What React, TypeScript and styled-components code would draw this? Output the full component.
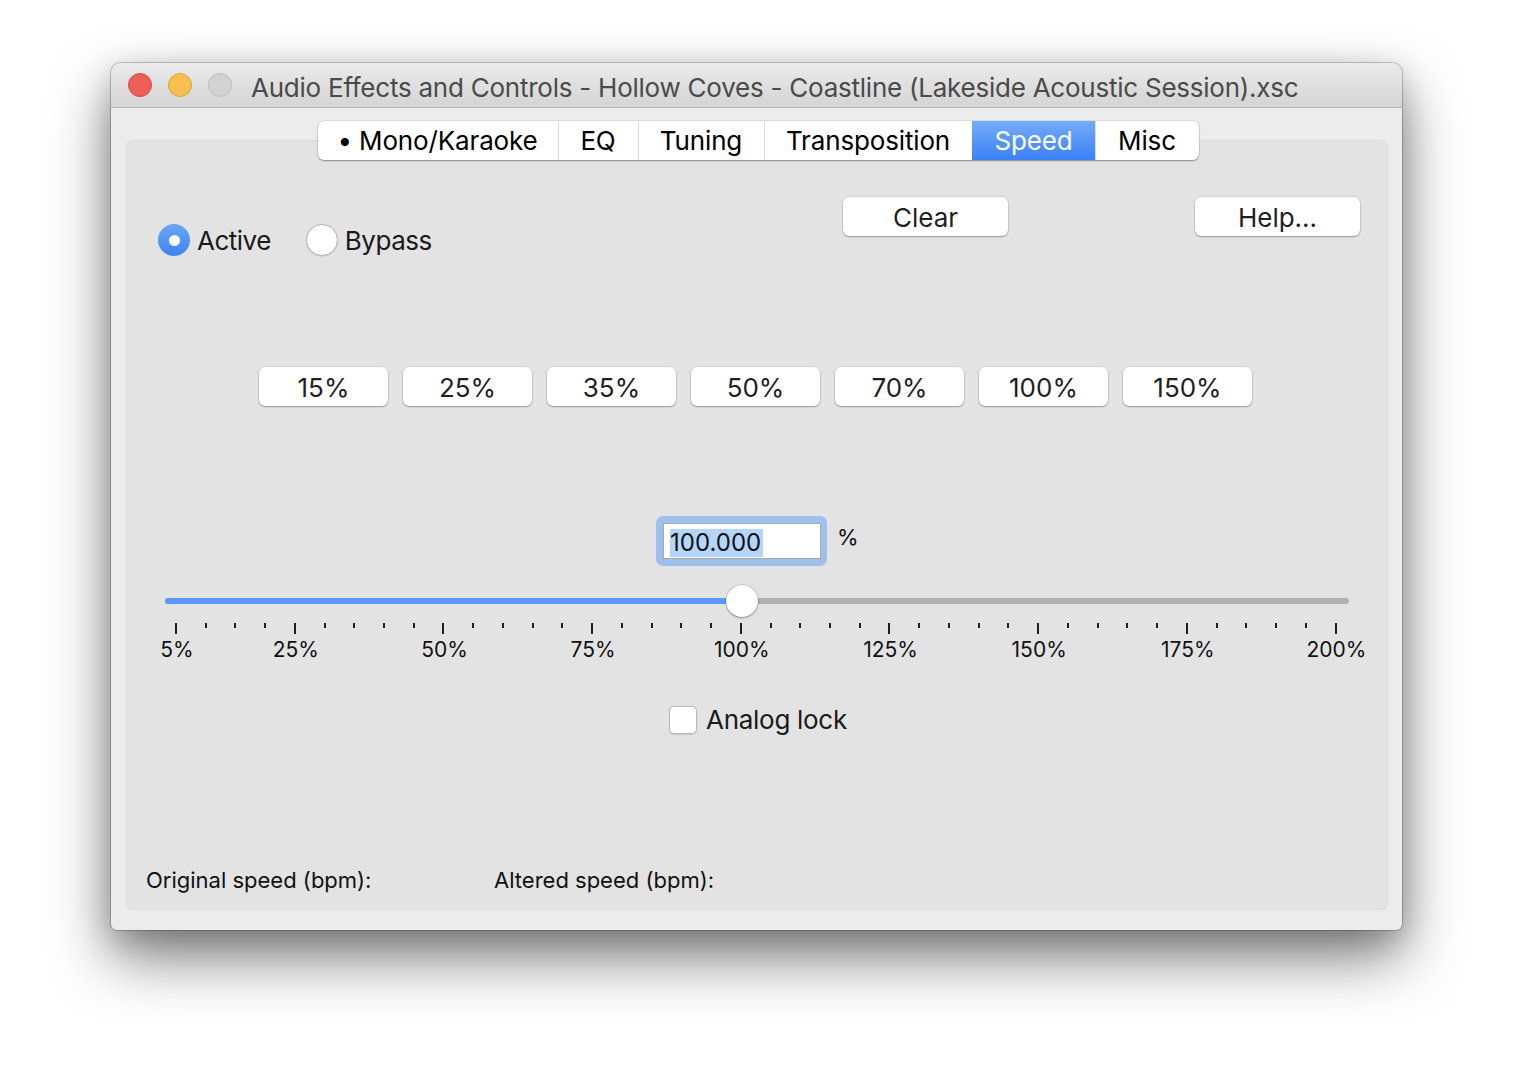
import React from 'react';
import styled, {createGlobalStyle, css} from 'styled-components';

const GlobalStyle = createGlobalStyle`
  html, body {
    margin: 0;
    background: #ffffff;
  }
  body {
    font-family: Inter, "Liberation Sans", sans-serif;
    -webkit-font-smoothing: antialiased;
  }
`;

const TAB_ITEMS = [
    {label: '• Mono/Karaoke', width: 240},
    {label: 'EQ', width: 80},
    {label: 'Tuning', width: 126},
    {label: 'Transposition', width: 208},
    {label: 'Speed', width: 123},
    {label: 'Misc', width: 104},
];
const PRESETS = ['15%', '25%', '35%', '50%', '70%', '100%', '150%'];
const TICK_COUNT = 40;
const MAJOR_LABELS: Record<number, string> = {
    0: '5%', 4: '25%', 9: '50%', 14: '75%', 19: '100%', 24: '125%', 29: '150%', 34: '175%', 39: '200%',
};
const SPEED = 100;
const SLIDER_FILL = ((SPEED - 5) / 195) * 100 + 0.05;

const Stage = styled.div`
    width: 1514px;
    height: 1090px;
    padding: 63px 0 0 111px;
    box-sizing: border-box;
    overflow: hidden;
`;

const Window = styled.div`
    width: 1291px;
    height: 867px;
    display: flex;
    flex-direction: column;
    background: #ececec;
    border-radius: 10px 10px 6px 6px;
    box-shadow: 0 0 0 1px rgba(0, 0, 0, 0.2), 0 28px 60px rgba(0, 0, 0, 0.5), 0 8px 30px rgba(0, 0, 0, 0.18);
    overflow: hidden;
`;

const TitleBar = styled.div`
    height: 44px;
    display: flex;
    align-items: center;
    padding-left: 17px;
    background: linear-gradient(#ebebeb, #d4d4d4);
    border-bottom: 1px solid #b8b8b8;
    flex-shrink: 0;
`;

const Lights = styled.div`
    display: flex;
    gap: 16px;
`;

const Light = styled.span<{$fill: string; $edge: string}>`
    width: 24px;
    height: 24px;
    box-sizing: border-box;
    border-radius: 50%;
    background: ${p => p.$fill};
    border: 1px solid ${p => p.$edge};
`;

const Title = styled.div`
    margin-left: 19px;
    margin-top: 4px;
    font-size: 26px;
    letter-spacing: -0.24px;
    color: #4a4a4a;
    white-space: nowrap;
`;

const Body = styled.div`
    flex: 1;
    display: flex;
    flex-direction: column;
    padding: 13px 14px 20px 15px;
`;

const TabStrip = styled.div`
    align-self: center;
    position: relative;
    z-index: 1;
    display: flex;
    height: 39px;
    margin-bottom: -20px;
    margin-left: 2px;
    background: #ffffff;
    border-radius: 6px;
    box-shadow: 0 1px 1.5px rgba(0, 0, 0, 0.35), 0 0 0 0.5px rgba(0, 0, 0, 0.14);
    overflow: hidden;
`;

const Tab = styled.div<{$width: number; $selected?: boolean}>`
    width: ${p => p.$width}px;
    box-sizing: border-box;
    display: flex;
    align-items: center;
    justify-content: center;
    font-size: 26px;
    letter-spacing: -0.15px;
    color: #000;
    & + & {
        border-left: 1px solid #dcdcdc;
    }
    ${p => p.$selected && css`
        background: linear-gradient(#74acf8, #3a81f6);
        color: #fff;
        border-left-color: transparent !important;
    `}
`;

const Panel = styled.div`
    flex: 1;
    display: flex;
    flex-direction: column;
    background: #e3e3e3;
    border-radius: 6px;
    box-shadow: inset 0 0 0 1px rgba(0, 0, 0, 0.035);
`;

const TopRow = styled.div`
    display: flex;
    align-items: flex-start;
    margin-top: 57px;
    height: 59px;
    padding: 0 28px 0 32px;
`;

const RadioGroup = styled.div`
    flex: 1;
    display: flex;
    gap: 35px;
    margin-top: 27px;
`;

const RadioItem = styled.label`
    display: flex;
    align-items: center;
    gap: 7px;
    font-size: 26px;
    letter-spacing: -0.5px;
    color: #1a1a1a;
    height: 32px;
`;

const RadioDot = styled.span<{$on?: boolean}>`
    width: 32px;
    height: 32px;
    box-sizing: border-box;
    border-radius: 50%;
    display: flex;
    align-items: center;
    justify-content: center;
    ${p => p.$on
        ? css`
            background: linear-gradient(#6aa6f8, #3d84f4);
            &::after {
                content: '';
                width: 11px;
                height: 11px;
                border-radius: 50%;
                background: #fff;
            }
        `
        : css`
            background: #fff;
            border: 1px solid #b3b3b3;
            box-shadow: 0 0.5px 1px rgba(0, 0, 0, 0.15);
        `}
`;

const PushButton = styled.div<{$width: number}>`
    width: ${p => p.$width}px;
    height: 39px;
    box-sizing: border-box;
    display: flex;
    align-items: center;
    justify-content: center;
    background: #fff;
    border-radius: 6px;
    box-shadow: 0 1px 1.5px rgba(0, 0, 0, 0.3), 0 0 0 0.5px rgba(0, 0, 0, 0.13);
    font-size: 26px;
    color: #1f1f1f;
    padding-top: 1px;
`;

const Spacer = styled.div<{$width: number}>`
    width: ${p => p.$width}px;
`;

const PresetRow = styled.div`
    display: flex;
    justify-content: center;
    gap: 15px;
    margin-top: 111px;
    padding-right: 3px;
`;

const FieldRow = styled.div`
    display: flex;
    align-items: center;
    gap: 10px;
    margin-top: 110px;
    padding-left: 530px;
`;

const FocusRing = styled.div`
    width: 171px;
    height: 50px;
    box-sizing: border-box;
    padding: 7px 6px 7px 7px;
    border-radius: 7px;
    background: #9ec0ec;
`;

const TextField = styled.div`
    height: 100%;
    box-sizing: border-box;
    background: #fff;
    border: 1px solid #a8a8a8;
    display: flex;
    align-items: center;
    padding: 3px 0 0 6px;
    font-size: 24px;
    color: #111;
`;

const Selection = styled.span`
    background: #b4d6fe;
    line-height: 28px;
    padding-right: 2px;
`;

const Unit = styled.span`
    font-size: 22px;
    color: #111;
    margin-top: -8px;
`;

const SliderRow = styled.div`
    margin: 19px 0 0 39px;
    width: 1184px;
    height: 32px;
    display: flex;
    align-items: center;
    position: relative;
`;

const Track = styled.div`
    width: 100%;
    height: 6px;
    border-radius: 3px;
    background: #b1b1b1;
    display: flex;
    overflow: hidden;
`;

const TrackFill = styled.div`
    height: 100%;
    background: #5a99f5;
`;

const Knob = styled.div`
    position: absolute;
    top: 0;
    width: 32px;
    height: 32px;
    margin-left: -16px;
    box-sizing: border-box;
    border-radius: 50%;
    background: #fff;
    box-shadow: 0 1px 2px rgba(0, 0, 0, 0.35), 0 0 0 0.5px rgba(0, 0, 0, 0.18);
`;

const Scale = styled.div`
    display: grid;
    grid-template-columns: repeat(${TICK_COUNT}, 29.744px);
    grid-template-rows: 11px auto;
    row-gap: 3px;
    margin: 6px 0 0 35px;
`;

const Tick = styled.div<{$major?: boolean}>`
    justify-self: center;
    width: 2px;
    height: ${p => (p.$major ? 11 : 5)}px;
    background: #1e1e1e;
`;

const TickLabel = styled.div<{$col: number}>`
    grid-row: 2;
    grid-column: ${p => p.$col + 1};
    justify-self: center;
    white-space: nowrap;
    font-size: 21px;
    line-height: 25px;
    padding-left: 2px;
    color: #111;
`;

const CheckRow = styled.label`
    align-self: center;
    display: flex;
    align-items: center;
    gap: 9px;
    margin-top: 42px;
    font-size: 26px;
    letter-spacing: -0.3px;
    color: #1a1a1a;
    padding-left: 2px;
`;

const CheckBox = styled.span`
    width: 28px;
    height: 28px;
    box-sizing: border-box;
    border-radius: 5px;
    background: #fff;
    border: 1px solid #b9b9b9;
    box-shadow: 0 0.5px 1px rgba(0, 0, 0, 0.12);
`;

const InfoRow = styled.div`
    margin-top: auto;
    display: grid;
    grid-template-columns: 348px auto;
    padding: 0 0 17px 20px;
    font-size: 22px;
    line-height: 26px;
    color: #111;
`;

export default function App() {
    return (
        <>
            <GlobalStyle/>
            <Stage>
                <Window>
                    <TitleBar>
                        <Lights>
                            <Light $fill="#ee5f58" $edge="#d6473f"/>
                            <Light $fill="#f7bf4f" $edge="#dba23a"/>
                            <Light $fill="#d2d2d2" $edge="#bcbcbc"/>
                        </Lights>
                        <Title>Audio Effects and Controls - Hollow Coves - Coastline (Lakeside Acoustic Session).xsc</Title>
                    </TitleBar>
                    <Body>
                        <TabStrip>
                            {TAB_ITEMS.map(t => (
                                <Tab key={t.label} $width={t.width} $selected={t.label === 'Speed'}>{t.label}</Tab>
                            ))}
                        </TabStrip>
                        <Panel>
                            <TopRow>
                                <RadioGroup>
                                    <RadioItem><RadioDot $on/>Active</RadioItem>
                                    <RadioItem><RadioDot/>Bypass</RadioItem>
                                </RadioGroup>
                                <PushButton $width={165}>Clear</PushButton>
                                <Spacer $width={187}/>
                                <PushButton $width={165}>Help...</PushButton>
                            </TopRow>
                            <PresetRow>
                                {PRESETS.map(p => <PushButton key={p} $width={129}>{p}</PushButton>)}
                            </PresetRow>
                            <FieldRow>
                                <FocusRing>
                                    <TextField><Selection>100.000</Selection></TextField>
                                </FocusRing>
                                <Unit>%</Unit>
                            </FieldRow>
                            <SliderRow>
                                <Track>
                                    <TrackFill style={{width: `${SLIDER_FILL}%`}}/>
                                </Track>
                                <Knob style={{left: `${SLIDER_FILL}%`}}/>
                            </SliderRow>
                            <Scale>
                                {Array.from({length: TICK_COUNT}, (_, i) => (
                                    <Tick key={i} $major={i in MAJOR_LABELS}/>
                                ))}
                                {Object.entries(MAJOR_LABELS).map(([i, label]) => (
                                    <TickLabel key={i} $col={Number(i)}>{label}</TickLabel>
                                ))}
                            </Scale>
                            <CheckRow><CheckBox/>Analog lock</CheckRow>
                            <InfoRow>
                                <span>Original speed (bpm):</span>
                                <span>Altered speed (bpm):</span>
                            </InfoRow>
                        </Panel>
                    </Body>
                </Window>
            </Stage>
        </>
    );
}
